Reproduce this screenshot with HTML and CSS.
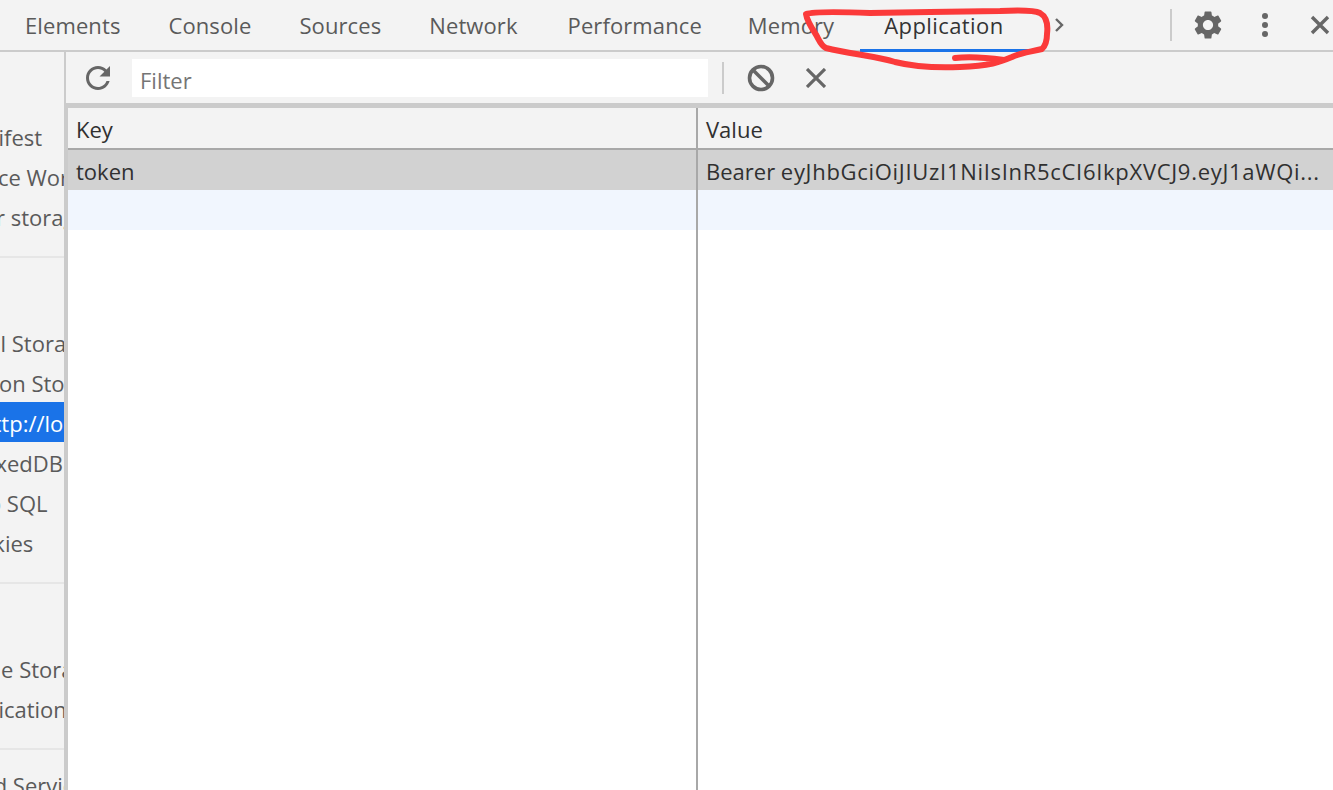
FILE: index.html
```html
<!DOCTYPE html>
<html lang="en">
<head>
<meta charset="utf-8">
<title>DevTools Application</title>
<link rel="stylesheet" href="styles.css">
</head>
<body>
<header class="tabbar">
  <nav class="tabs">
    <span class="tab">Elements</span>
    <span class="tab">Console</span>
    <span class="tab">Sources</span>
    <span class="tab">Network</span>
    <span class="tab tab-perf">Performance</span>
    <span class="tab">Memory</span>
    <span class="tab active">Application</span>
  </nav>
  <svg class="chevron" viewBox="0 0 12 16"><path d="M3 2l6 6-6 6" fill="none" stroke="#666" stroke-width="2.4"/></svg>
  <div class="tabbar-right">
    <span class="vsep"></span>
    <svg class="gear" viewBox="0 0 24 24"><path fill="#666" d="M19.14 12.94c.04-.3.06-.61.06-.94 0-.32-.02-.64-.07-.94l2.03-1.58c.18-.14.23-.41.12-.61l-1.92-3.32c-.12-.22-.37-.29-.59-.22l-2.39.96c-.5-.38-1.03-.7-1.62-.94l-.36-2.54c-.04-.24-.24-.41-.48-.41h-3.84c-.24 0-.43.17-.47.41l-.36 2.54c-.59.24-1.13.57-1.62.94l-2.39-.96c-.22-.08-.47 0-.59.22L2.74 8.87c-.12.21-.08.47.12.61l2.03 1.58c-.05.3-.09.63-.09.94s.02.64.07.94l-2.03 1.58c-.18.14-.23.41-.12.61l1.92 3.32c.12.22.37.29.59.22l2.39-.96c.5.38 1.03.7 1.62.94l.36 2.54c.05.24.24.41.48.41h3.84c.24 0 .44-.17.47-.41l.36-2.54c.59-.24 1.13-.56 1.62-.94l2.39.96c.22.08.47 0 .59-.22l1.92-3.32c.12-.22.07-.47-.12-.61l-2.01-1.58zM12 15.6c-1.98 0-3.6-1.62-3.6-3.6s1.62-3.6 3.6-3.6 3.6 1.62 3.6 3.6-1.62 3.6-3.6 3.6z"/></svg>
    <svg class="dots" viewBox="0 0 8 28"><circle cx="4" cy="5" r="3" fill="#666"/><circle cx="4" cy="14" r="3" fill="#666"/><circle cx="4" cy="23" r="3" fill="#666"/></svg>
    <svg class="close" viewBox="0 0 20 20"><path d="M2 2l16 16M18 2L2 18" stroke="#666" stroke-width="3.4" fill="none"/></svg>
  </div>
</header>
<div class="main">
  <aside class="sidebar">
    <div class="tree">
      <div class="row off-47">Manifest</div>
      <div class="row off-52">Service Workers</div>
      <div class="row off-48">Clear storage</div>
    </div>
    <div class="tree-sep"></div>
    <div class="tree">
      <div class="row"></div>
      <div class="row off-47">Local Storage</div>
      <div class="row off-52">Session Storage</div>
      <div class="row off-20 selected">http://localhost</div>
      <div class="row off-50">IndexedDB</div>
      <div class="row off-45">Web SQL</div>
      <div class="row off-47">Cookies</div>
    </div>
    <div class="tree-sep"></div>
    <div class="tree">
      <div class="row"></div>
      <div class="row off-49">Cache Storage</div>
      <div class="row off-48">Application Cache</div>
    </div>
    <div class="tree-sep"></div>
    <div class="tree">
      <div class="row off-116 compact">Background Services</div>
    </div>
  </aside>
  <section class="content">
    <div class="toolbar">
      <svg class="refresh" viewBox="0 0 24 24"><path fill="#666" d="M17.65 6.35C16.2 4.9 14.21 4 12 4c-4.42 0-7.99 3.58-7.99 8s3.57 8 7.99 8c3.73 0 6.84-2.55 7.73-6h-2.08c-.82 2.33-3.04 4-5.65 4-3.31 0-6-2.69-6-6s2.69-6 6-6c1.66 0 3.14.69 4.22 1.78L13 11h7V4l-2.35 2.35z"/></svg>
      <div class="filter">Filter</div>
      <span class="vsep tool-sep"></span>
      <svg class="block" viewBox="0 0 28 28"><circle cx="14" cy="14" r="11.5" fill="none" stroke="#666" stroke-width="3.6"/><path d="M6 6l16 16" stroke="#666" stroke-width="3.6"/></svg>
      <svg class="clear" viewBox="0 0 20 20"><path d="M1 1l18 18M19 1L1 19" stroke="#666" stroke-width="3.2" fill="none"/></svg>
    </div>
    <div class="table">
      <div class="tr thead"><div class="td col-key">Key</div><div class="td col-value">Value</div></div>
      <div class="tr selected-row"><div class="td col-key">token</div><div class="td col-value">Bearer <span class="jwt">eyJhbGciOiJIUzI1NiIsInR5cCI6IkpXVCJ9.eyJ1aWQi...</span></div></div>
      <div class="tr empty-row"><div class="td col-key"></div><div class="td col-value"></div></div>
      <div class="tr filler"><div class="td col-key"></div><div class="td col-value"></div></div>
    </div>
  </section>
</div>
<svg class="scribble" viewBox="0 0 1333 790">
  <path d="M806 14C815 11 845 12 870 13L930 12L1000 11C1020 10 1034 10 1040 13C1047 17 1048 26 1047 34C1047 40 1046 45 1042 49C1030 52 1020 53 1012 57C1000 62 990 66 960 67C935 68 915 67 895 62C875 56 850 54 826 48C820 45 819 39 815 33C811 27 807 20 806 14ZM955 58C970 56 990 58 1004 60" fill="none" stroke="#fb3a3a" stroke-width="6" stroke-linecap="round" stroke-linejoin="round"/>
</svg>
</body>
</html>
```
FILE: styles.css
```css
* { box-sizing: border-box; }
html, body { margin: 0; height: 100%; }
body {
  width: 1333px;
  height: 790px;
  overflow: hidden;
  background: #f3f3f3;
  font-family: "Open Sans", "Noto Sans", "Liberation Sans", sans-serif;
  font-size: 22px;
  color: #5a5a5a;
  position: relative;
  display: flex;
  flex-direction: column;
}
svg { display: block; flex: none; }

.tabbar {
  height: 52px;
  flex: none;
  display: flex;
  align-items: center;
  border-bottom: 2px solid #cbcbcb;
  position: relative;
}
.tabs { display: flex; gap: 48px; padding-left: 25px; height: 100%; letter-spacing: .1px; }
.tab { line-height: 50px; white-space: nowrap; position: relative; }
.tab-perf { margin-left: 2px; margin-right: -2px; }
.tab.active { color: #333; letter-spacing: .42px; margin-left: 2px; }
.tab.active::after {
  content: "";
  position: absolute;
  left: -24px;
  right: -24px;
  bottom: -2px;
  height: 3px;
  background: #1a73e8;
}
.chevron { width: 12px; height: 16px; margin-left: 49px; }
.tabbar-right { margin-left: auto; display: flex; align-items: center; height: 100%; }
.vsep { width: 2px; height: 32px; background: #cbcbcb; flex: none; }
.gear { width: 34px; height: 34px; margin-left: 19px; }
.dots { width: 8px; height: 28px; margin-left: 36px; }
.close { width: 20px; height: 20px; margin-left: 41px; margin-right: 3px; }

.main { flex: 1; display: flex; min-height: 0; }
.sidebar {
  width: 66px;
  flex: none;
  border-right: 2px solid #cbcbcb;
  overflow: hidden;
  padding-top: 64px;
}
.row { height: 40px; line-height: 42px; white-space: nowrap; }
.tree-sep { height: 2px; background: #e6e6e6; margin: 20px 0 24px; }
.off-20 { text-indent: -20px; }
.off-45 { text-indent: -45px; }
.off-47 { text-indent: -47px; }
.off-48 { text-indent: -48px; }
.off-49 { text-indent: -49px; }
.off-50 { text-indent: -50px; }
.off-52 { text-indent: -52px; }
.off-116 { text-indent: -116px; }
.compact { line-height: 22px; }
.selected { background: #1a73e8; color: #fff; }

.content { flex: 1; display: flex; flex-direction: column; min-width: 0; }
.toolbar {
  height: 56px;
  flex: none;
  display: flex;
  align-items: center;
  border-bottom: 5px solid #cbcbcb;
  padding-left: 14px;
}
.refresh { width: 36px; height: 36px; }
.filter {
  width: 576px;
  height: 38px;
  margin-left: 16px;
  padding-left: 8px;
  line-height: 42px;
  overflow: hidden;
  background: #fff;
  color: #757575;
}
.tool-sep { margin-left: 14px; }
.block { width: 28px; height: 28px; margin-left: 23px; }
.clear { width: 20px; height: 20px; margin-left: 31px; }

.table { flex: 1; display: flex; flex-direction: column; border-left: 2px solid #cbcbcb; background: #fff; color: #303030; min-height: 0; }
.tr { display: flex; height: 40px; flex: none; }
.td { padding-left: 8px; line-height: 42px; white-space: nowrap; overflow: hidden; }
.col-key { width: 630px; flex: none; border-right: 2px solid #a8a8a8; }
.col-value { flex: 1; min-width: 0; }
.jwt { letter-spacing: .7px; }
.thead { height: 42px; background: #f3f3f3; border-bottom: 2px solid #a8a8a8; }
.selected-row { background: #d2d2d2; }
.empty-row { background: #f1f6fe; }
.filler { flex: 1; }

.scribble { position: absolute; left: 0; top: 0; width: 1333px; height: 790px; pointer-events: none; }
```
